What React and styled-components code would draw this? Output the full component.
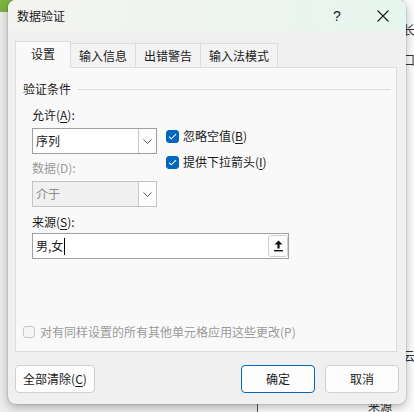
import React from "react";
import styled, { createGlobalStyle } from "styled-components";

const GlobalStyle = createGlobalStyle`
  html, body { margin: 0; padding: 0; }
  body {
    font-family: "Noto Sans CJK SC", "Noto Sans", sans-serif;
    font-size: 12px;
    color: #1a1a1a;
    background: #eeeeee;
  }
  u { text-decoration-thickness: 1px; text-underline-offset: 2px; }
`;

const Desktop = styled.div`
  position: relative;
  width: 414px;
  height: 412px;
  overflow: hidden;
  background: #ececec;
`;

const GreenBar = styled.div`
  position: absolute;
  left: 0;
  top: 0;
  width: 40px;
  height: 12px;
  background: #7cb342;
`;

const SheetRight = styled.div`
  position: absolute;
  left: 403px;
  top: 0;
  width: 30px;
  height: 412px;
  background: #fbfbfb;
  display: flex;
  flex-direction: column;
  line-height: 16px;
  color: #333;
`;

const SheetCell = styled.div`
  height: ${(p) => p.$h}px;
  flex: none;
  display: flex;
  align-items: flex-end;
  white-space: nowrap;
`;

const SheetBottom = styled.div`
  position: absolute;
  left: 257px;
  top: 396px;
  width: 157px;
  height: 16px;
  border-left: 1px solid #555;
  background: #fbfbfb;
  padding-left: 110px;
  box-sizing: border-box;
  line-height: 20px;
  color: #333;
  white-space: nowrap;
`;

const Dialog = styled.div`
  position: absolute;
  left: 8px;
  top: 0;
  width: 398px;
  height: 404px;
  border-radius: 8px;
  overflow: hidden;
  background: #f0f0f0;
  box-shadow: 0 3px 10px rgba(0, 0, 0, 0.28), 0 0 0 1px rgba(0, 0, 0, 0.08);
  display: flex;
  flex-direction: column;
  z-index: 2;
`;

const TitleBar = styled.div`
  height: 31px;
  flex: none;
  display: flex;
  align-items: center;
  padding-left: 9px;
  background: linear-gradient(90deg, #f4f4f1 0%, #eef4ef 55%, #e6f6ee 100%);
`;

const Title = styled.div`
  flex: 1;
  font-size: 12px;
  line-height: 16px;
  color: #1a1a1a;
`;

const TitleButton = styled.div`
  width: 46px;
  height: 31px;
  display: flex;
  align-items: center;
  justify-content: center;
  font-family: "Liberation Sans", "DejaVu Sans", sans-serif;
  font-size: 14px;
  color: #1a1a1a;
`;

const Body = styled.div`
  flex: 1;
  display: flex;
  flex-direction: column;
  padding: 10px 9px 10px 7px;
`;

const TabRow = styled.div`
  display: flex;
  align-items: flex-end;
  height: 27px;
  margin-bottom: -1px;
`;

const Tab = styled.div`
  box-sizing: border-box;
  height: ${(p) => (p.$active ? 27 : 25)}px;
  padding: 0 ${(p) => (p.$active ? 15 : 8)}px;
  display: flex;
  align-items: center;
  justify-content: center;
  line-height: 16px;
  background: ${(p) => (p.$active ? "#f9f9f9" : "#f3f3f3")};
  border: 1px solid #dcdcdc;
  border-bottom: none;
  margin-left: ${(p) => (p.$first ? 0 : -1)}px;
  padding-bottom: ${(p) => (p.$active ? 2 : 0)}px;
  position: ${(p) => (p.$active ? "relative" : "static")};
  z-index: ${(p) => (p.$active ? 3 : "auto")};
  color: #1a1a1a;
  white-space: nowrap;
  min-width: ${(p) => p.$w || 0}px;
`;

const Panel = styled.div`
  position: relative;
  z-index: 1;
  box-sizing: border-box;
  height: 285px;
  border: 1px solid #dcdcdc;
  background: #f9f9f9;
  display: flex;
  flex-direction: column;
  padding-left: 7px;
`;

const GroupHeader = styled.div`
  margin-top: 13px;
  height: 16px;
  display: flex;
  align-items: center;
  line-height: 16px;
`;

const GroupLine = styled.div`
  flex: 1;
  height: 0;
  border-top: 1px solid #dcdcdc;
  margin: 0 5px 0 6px;
`;

const Indent = styled.div`
  margin-left: 9px;
  display: flex;
  flex-direction: column;
`;

const FieldLabel = styled.div`
  height: 16px;
  line-height: 16px;
  margin-top: ${(p) => p.$mt || 0}px;
  color: ${(p) => (p.$disabled ? "#9a9a9a" : "#1a1a1a")};
  white-space: nowrap;
`;

const TwoCols = styled.div`
  margin-top: 5px;
  display: grid;
  grid-template-columns: 125px auto;
  column-gap: 9px;
  align-items: start;
`;

const Col = styled.div`
  display: flex;
  flex-direction: column;
`;

const SelectBox = styled.div`
  box-sizing: border-box;
  height: 26px;
  margin-top: ${(p) => p.$mt || 0}px;
  display: flex;
  border: 1px solid ${(p) => (p.$disabled ? "#c4c4c4" : "#a0a0a0")};
  background: ${(p) => (p.$disabled ? "#f0f0f0" : "#ffffff")};
`;

const SelectText = styled.div`
  flex: 1;
  padding-left: 3px;
  display: flex;
  align-items: center;
  line-height: 16px;
  color: ${(p) => (p.$disabled ? "#8c8c8c" : "#1a1a1a")};
`;

const SelectButton = styled.div`
  width: 17px;
  display: flex;
  align-items: center;
  justify-content: center;
  border-left: 1px solid #c8c8c8;
  background: #fdfdfd;
`;

const CheckRow = styled.label`
  display: flex;
  align-items: center;
  height: 16px;
  line-height: 16px;
  gap: ${(p) => p.$gap || 4}px;
  margin-top: ${(p) => p.$mt || 0}px;
  color: ${(p) => (p.$disabled ? "#9a9a9a" : "#1a1a1a")};
  white-space: nowrap;
`;

const CheckBox = styled.span`
  box-sizing: border-box;
  flex: none;
  width: ${(p) => p.$size}px;
  height: ${(p) => p.$size}px;
  border-radius: 3px;
  display: inline-flex;
  align-items: center;
  justify-content: center;
  background: ${(p) => (p.$checked ? "#0067c0" : "#f6f6f6")};
  border: 1px solid ${(p) => (p.$checked ? "#0067c0" : "#c6c6c6")};
`;

const SourceInput = styled.div`
  box-sizing: border-box;
  margin-top: 3px;
  width: 257px;
  height: 26px;
  border: 1px solid #a0a0a0;
  background: #ffffff;
  display: flex;
  align-items: center;
  padding-left: 3px;
`;

const InputText = styled.div`
  flex: 1;
  display: flex;
  align-items: center;
  line-height: 16px;
`;

const Caret = styled.span`
  width: 1px;
  height: 17px;
  background: #000;
  margin-left: 1px;
`;

const PickButton = styled.div`
  box-sizing: border-box;
  width: 20px;
  height: 22px;
  border: 1px solid #cdcdcd;
  border-radius: 3px;
  background: #fdfdfd;
  display: flex;
  align-items: center;
  justify-content: center;
`;

const BottomCheck = styled.div`
  margin-top: auto;
  margin-bottom: 11px;
`;

const ButtonRow = styled.div`
  margin-top: 13px;
  margin-right: -2px;
  display: flex;
  align-items: center;
  gap: 10px;
`;

const Button = styled.div`
  box-sizing: border-box;
  height: 28px;
  width: ${(p) => p.$w}px;
  margin-right: ${(p) => (p.$push ? "auto" : "0")};
  border: 1px solid ${(p) => (p.$primary ? "#0067c0" : "#d0d0d0")};
  border-radius: 4px;
  background: #fdfdfd;
  display: flex;
  align-items: center;
  justify-content: center;
  line-height: 16px;
  color: #1a1a1a;
  white-space: nowrap;
`;

const Check = () => (
  <svg width="9" height="7" viewBox="0 0 9 7">
    <path d="M1 3.6 L3.3 5.8 L8 1.2" fill="none" stroke="#ffffff" strokeWidth="1.1" />
  </svg>
);

const Chevron = () => (
  <svg width="9" height="5" viewBox="0 0 9 5">
    <path d="M0.5 0.5 L4.5 4.5 L8.5 0.5" fill="none" stroke="#555" strokeWidth="1" />
  </svg>
);

const UploadIcon = () => (
  <svg width="9" height="12" viewBox="0 0 9 12">
    <polygon points="4.5,0.5 8.5,4.6 5.6,4.6 5.6,8.5 3.4,8.5 3.4,4.6 0.5,4.6" fill="#111" />
    <rect x="0" y="10" width="9" height="1.4" fill="#111" />
  </svg>
);

const CloseIcon = () => (
  <svg width="12" height="12" viewBox="0 0 12 12">
    <path d="M0.5 0.5 L11.5 11.5 M11.5 0.5 L0.5 11.5" stroke="#1a1a1a" strokeWidth="1.1" />
  </svg>
);

export default function App() {
  return (
    <>
      <GlobalStyle />
      <Desktop>
        <GreenBar />
        <SheetRight>
          <SheetCell $h={38}>长</SheetCell>
          <SheetCell $h={30}>口</SheetCell>
          <SheetCell $h={272}></SheetCell>
          <SheetCell $h={24}>云</SheetCell>
          <SheetCell $h={24}>:</SheetCell>
        </SheetRight>
        <SheetBottom>来源</SheetBottom>
        <Dialog>
          <TitleBar>
            <Title>数据验证</Title>
            <TitleButton>?</TitleButton>
            <TitleButton>
              <CloseIcon />
            </TitleButton>
          </TitleBar>
          <Body>
            <TabRow>
              <Tab $active $first>设置</Tab>
              <Tab>输入信息</Tab>
              <Tab $w={66}>出错警告</Tab>
              <Tab $w={78}>输入法模式</Tab>
            </TabRow>
            <Panel>
              <GroupHeader>
                <span>验证条件</span>
                <GroupLine />
              </GroupHeader>
              <Indent>
                <FieldLabel $mt={10}>
                  允许(<u>A</u>):
                </FieldLabel>
                <TwoCols>
                  <Col>
                    <SelectBox>
                      <SelectText>序列</SelectText>
                      <SelectButton>
                        <Chevron />
                      </SelectButton>
                    </SelectBox>
                    <FieldLabel $mt={6} $disabled>
                      数据(D):
                    </FieldLabel>
                    <SelectBox $mt={5} $disabled>
                      <SelectText $disabled>介于</SelectText>
                      <SelectButton>
                        <Chevron />
                      </SelectButton>
                    </SelectBox>
                  </Col>
                  <Col>
                    <CheckRow>
                      <CheckBox $size={13} $checked>
                        <Check />
                      </CheckBox>
                      <span>
                        忽略空值(<u>B</u>)
                      </span>
                    </CheckRow>
                    <CheckRow $mt={10}>
                      <CheckBox $size={13} $checked>
                        <Check />
                      </CheckBox>
                      <span>
                        提供下拉箭头(<u>I</u>)
                      </span>
                    </CheckRow>
                  </Col>
                </TwoCols>
                <FieldLabel $mt={7}>
                  来源(<u>S</u>):
                </FieldLabel>
                <SourceInput>
                  <InputText>
                    <span>男,女</span>
                    <Caret />
                  </InputText>
                  <PickButton>
                    <UploadIcon />
                  </PickButton>
                </SourceInput>
              </Indent>
              <BottomCheck>
                <CheckRow $disabled $gap={5}>
                  <CheckBox $size={12} />
                  <span>对有同样设置的所有其他单元格应用这些更改(P)</span>
                </CheckRow>
              </BottomCheck>
            </Panel>
            <ButtonRow>
              <Button $w={80} $push>
                <span>
                  全部清除(<u>C</u>)
                </span>
              </Button>
              <Button $w={74} $primary>
                确定
              </Button>
              <Button $w={74}>取消</Button>
            </ButtonRow>
          </Body>
        </Dialog>
      </Desktop>
    </>
  );
}
